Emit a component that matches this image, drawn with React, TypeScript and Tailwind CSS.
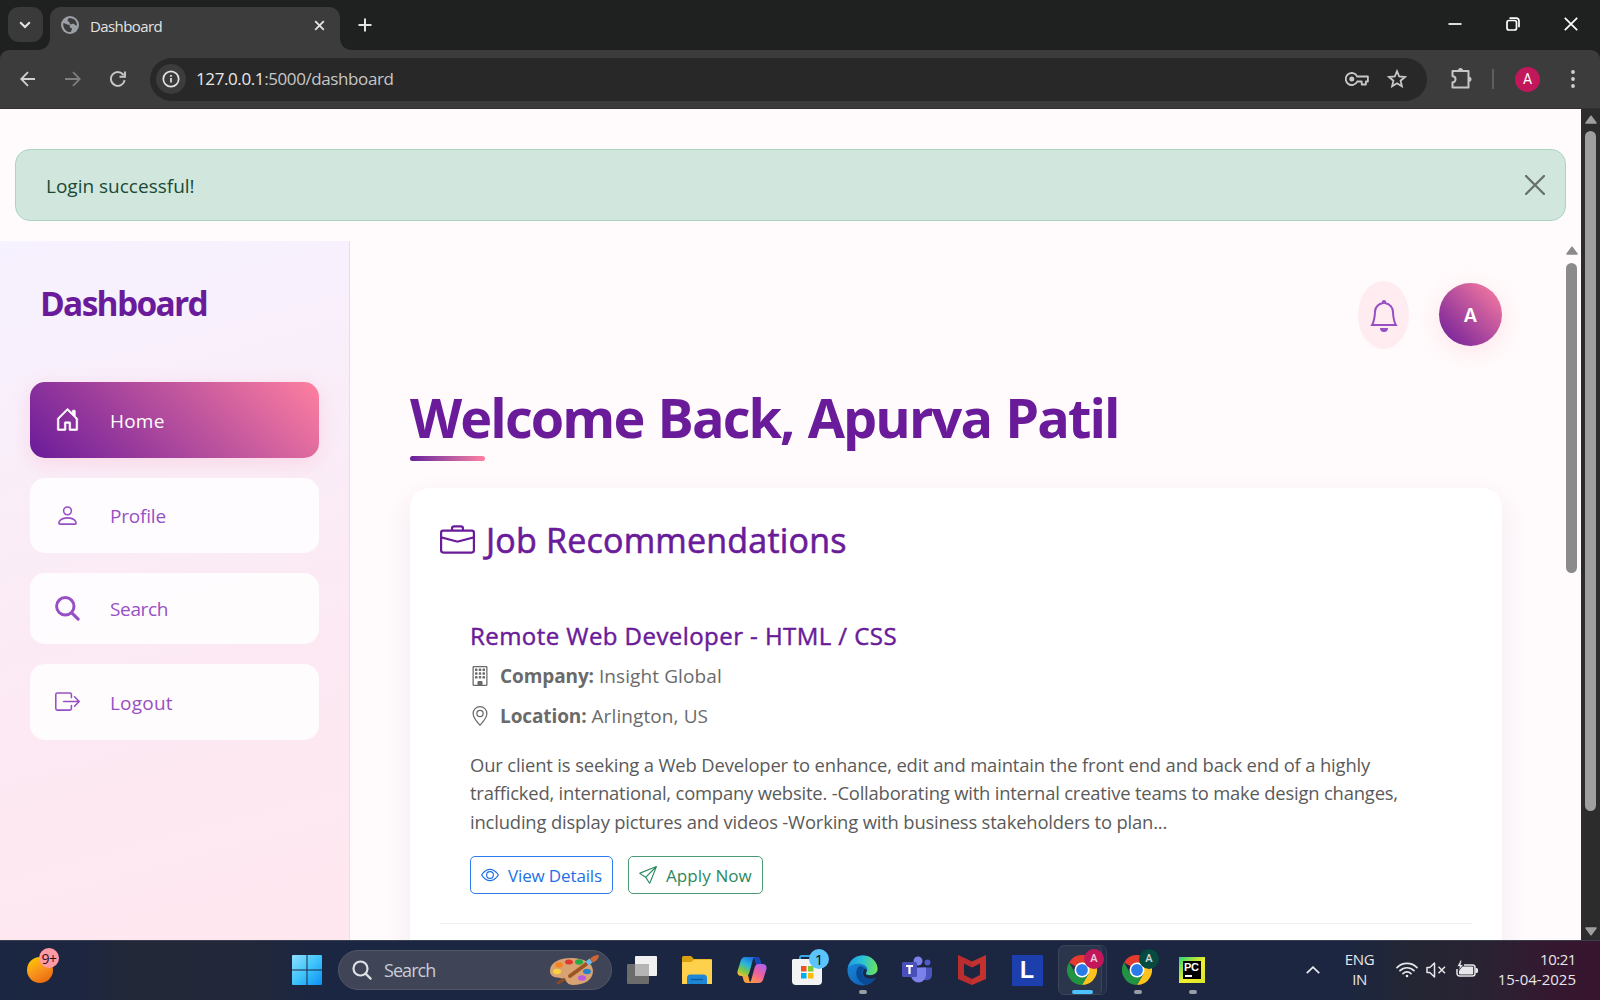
import React from "react";
import {
  BsHouseDoor,
  BsPerson,
  BsBoxArrowRight,
  BsBell,
  BsBriefcase,
  BsBuilding,
  BsGeoAlt,
  BsEye,
  BsSend,
} from "react-icons/bs";

/* ---------- Browser chrome ---------- */

function GlobeIcon() {
  return (
    <svg viewBox="0 0 18 18" className="size-[18px]">
      <circle cx="9" cy="9" r="9" fill="#9aa0a6" />
      <path
        d="M2.200 7.200c1.500 0 2.300.3 3.300 1 .9.700 2.500.2 3.200 1 .6.800-.3 1.500.3 2.200.6.600 1.900.2 2 1.300.1 1-1 1.600-1 3.300-4.400.600-8.200-3.600-7.800-8.800zM7.800 2c-.2 1.300-1.300 1.400-1.200 2.600.1 1 1.400.8 1.900 1.700.4.800 0 1.600.9 2 1.200.4 1.800-.8 3-.5 1.400.3 1.300 1.700 3.500 1.600.3-4-2.900-7.800-8.100-7.400z"
        fill="#3c3c3c"
      />
    </svg>
  );
}

function TabStrip() {
  return (
    <div className="flex h-[50px] bg-[#1f2120] text-[#e3e3e3]">
      <div className="ml-[7.500px] mt-[7px] flex size-[35px] items-center justify-center rounded-[11px] bg-[#3a3a3a]">
        <svg viewBox="0 0 12 8" className="h-[8px] w-[12px]" fill="none" stroke="currentColor" strokeWidth="2.1">
          <path d="M1.200 1.200 6 6l4.800-4.800" />
        </svg>
      </div>
      <div className="relative ml-[7.500px] mt-[7px] flex h-[43px] w-[290px] items-center rounded-t-[11px] bg-[#3c3c3c] pb-[7px]">
        <svg viewBox="0 0 12 12" className="absolute -left-[12px] bottom-0 size-[12px]">
          <path d="M12 0v12H0C7 12 12 7 12 0z" fill="#3c3c3c" />
        </svg>
        <svg viewBox="0 0 12 12" className="absolute -right-[12px] bottom-0 size-[12px]">
          <path d="M0 0v12h12C5 12 0 7 0 0z" fill="#3c3c3c" />
        </svg>
        <div className="ml-[11px]">
          <GlobeIcon />
        </div>
        <span className="ml-[11px] mt-[2px] w-[225px] text-[15px] leading-[20px] tracking-[-0.6px]">Dashboard</span>
        <svg viewBox="0 0 12 12" className="-ml-[1px] size-[11px]" fill="none" stroke="currentColor" strokeWidth="2">
          <path d="M1.300 1.300l9.400 9.400M10.700 1.300l-9.400 9.400" />
        </svg>
      </div>
      <svg viewBox="0 0 14 14" className="ml-[18px] mt-[18px] size-[14px]" fill="none" stroke="currentColor" strokeWidth="2">
        <path d="M7 .5v13M.5 7h13" />
      </svg>
      <div className="ml-auto mr-[22px] mt-[17px] flex h-[14px] items-center gap-[44px] text-white">
        <svg viewBox="0 0 14 14" className="size-[14px]" fill="none" stroke="currentColor" strokeWidth="1.700">
          <path d="M.5 7h13" />
        </svg>
        <svg viewBox="0 0 14 14" className="size-[14px]" fill="none" stroke="currentColor" strokeWidth="1.700">
          <rect x="1" y="3.500" width="9.500" height="9.500" rx="2" />
          <path d="M3.500 1.200H10A3 3 0 0 1 13 4.200v6" />
        </svg>
        <svg viewBox="0 0 14 14" className="size-[14px]" fill="none" stroke="currentColor" strokeWidth="1.700">
          <path d="M.8.8l12.400 12.400M13.200.8L.8 13.200" />
        </svg>
      </div>
    </div>
  );
}

function Toolbar() {
  return (
    <div className="bg-[#1f2120]">
      <div className="flex h-[59px] items-center rounded-t-[9px] border-b border-[#323232] bg-[#3c3c3c] text-[#c7c7c7]">
        <svg viewBox="0 0 16 16" className="ml-[20px] size-[16px]" fill="none" stroke="#d0d0d0" strokeWidth="1.800">
          <path d="M15 8H1.500M8 1.200 1.200 8 8 14.800" />
        </svg>
        <svg viewBox="0 0 16 16" className="ml-[29px] size-[16px]" fill="none" stroke="#7e7e7e" strokeWidth="1.800">
          <path d="M0 8h14M8 1.200 14.800 8 8 14.800" />
        </svg>
        <svg viewBox="0 0 16 16" className="ml-[29px] size-[16px]" fill="none" stroke="#c7c7c7" strokeWidth="1.900">
          <path d="M14.600 9.200A6.900 6.900 0 1 1 13.600 4.200" />
          <path d="M15 .4v5.400H9.500" />
        </svg>
        <div className="ml-[24px] flex h-[43px] w-[1277px] items-center rounded-full bg-[#282828]">
          <div className="ml-[6px] flex size-[30px] items-center justify-center rounded-full bg-[#3c3c3c]">
            <svg viewBox="0 0 18 18" className="size-[18px]" fill="none" stroke="#e3e3e3" strokeWidth="1.700">
              <circle cx="9" cy="9" r="7.700" />
              <path d="M9 8v4.600M9 5v1.700" />
            </svg>
          </div>
          <span className="ml-[10px] text-[17px] leading-[22px] tracking-[-0.4px] text-[#c7c7c7]">
            <span className="text-[#e8e8e8]">127.0.0.1</span>:5000/dashboard
          </span>
          <svg viewBox="0 0 24 14" className="ml-auto h-[14px] w-[24px]" fill="none" stroke="currentColor" strokeWidth="1.800">
            <path d="M12.200 4.500h10.700v5h-2v3h-4.200v-3h-4.500A6 6 0 1 1 12.200 4.500z" strokeLinejoin="round" />
            <circle cx="6.800" cy="7" r="2.500" fill="currentColor" stroke="none" />
          </svg>
          <svg viewBox="0 0 20 19" className="-mt-[2px] ml-[18px] mr-[20px] h-[19px] w-[20px]" fill="none" stroke="currentColor" strokeWidth="1.800">
            <path d="M10 2.200l2.200 5.300 5.700.5-4.300 3.700 1.300 5.600-4.900-3-4.900 3 1.300-5.600L2.100 8l5.700-.5z" />
          </svg>
        </div>
        <svg viewBox="0 0 21 21" className="-mt-[2px] ml-[24px] size-[21px]" fill="none" stroke="currentColor" strokeWidth="2">
          <path d="M1.500 3h16v16.500h-16v-5.200a3 3 0 0 0 0-6z" strokeLinejoin="round" />
          <path d="M7 2.500a2.500 2.500 0 0 1 5 0zM18 8.700a2.500 2.500 0 0 1 0 5z" fill="currentColor" stroke="none" />
        </svg>
        <div className="ml-[20px] h-[20px] w-[2px] bg-[#5e5e5e]" />
        <div className="ml-[21px] flex size-[25px] items-center justify-center rounded-full bg-[#c2185b] font-['Roboto'] text-[14px] text-white">
          A
        </div>
        <svg viewBox="0 0 4 18" className="ml-[30.500px] h-[18px] w-[4px]" fill="#d0d0d0">
          <circle cx="2" cy="2" r="1.900" />
          <circle cx="2" cy="9" r="1.900" />
          <circle cx="2" cy="16" r="1.900" />
        </svg>
      </div>
    </div>
  );
}

/* ---------- Sidebar ---------- */

function SearchGlyph() {
  return (
    <svg viewBox="0 0 25 25" className="size-[25px]" fill="none" stroke="currentColor" strokeLinecap="round">
      <circle cx="10.300" cy="10.300" r="8.700" strokeWidth="3" />
      <path d="M16.800 16.800l6.300 6.300" strokeWidth="3.100" />
    </svg>
  );
}

function NavItem({ icon, label, className }: { icon: React.ReactNode; label: string; className: string }) {
  return (
    <div className={`flex items-center rounded-[15px] pl-[24.500px] text-[19px] ${className}`}>
      <span className="flex w-[55.500px] text-[25px]">{icon}</span>
      <span className="mt-[2px] leading-[28px]">{label}</span>
    </div>
  );
}

function Sidebar() {
  return (
    <aside className="w-[350px] shrink-0 border-r border-[#f0d9e8] bg-[linear-gradient(165deg,#f7f2ff_0%,#f8f0fd_14%,#f9eef8_30%,#fce9f3_60%,#ffe7ef_100%)] px-[30px] pt-[42px]">
      <h2 className="mb-[59px] pl-[10px] text-[33.500px] font-bold leading-[40px] tracking-[-1.700px] text-[#6a1b9a]">Dashboard</h2>
      <nav className="flex w-[289px] flex-col gap-[20px] text-[#9750c4]">
        <NavItem
          icon={<BsHouseDoor className="[stroke-width:0.4px]" />}
          label="Home"
          className="h-[75.500px] bg-[linear-gradient(45deg,#6a1b9a,#ff80a0)] tracking-[0.2px] text-white shadow-[0_5px_20px_rgba(255,110,150,0.18)]"
        />
        <NavItem icon={<BsPerson />} label="Profile" className="h-[75.500px] bg-white/85 tracking-[-0.2px]" />
        <NavItem icon={<SearchGlyph />} label="Search" className="h-[70.500px] bg-white/85 tracking-[-0.35px]" />
        <NavItem icon={<BsBoxArrowRight />} label="Logout" className="h-[76px] bg-white/85 tracking-[0.2px]" />
      </nav>
    </aside>
  );
}

/* ---------- Main content ---------- */

function JobCard() {
  return (
    <section className="mt-[27px] h-[560px] rounded-[20px] bg-white px-[30px] pt-[31px] shadow-[0_10px_30px_rgba(106,27,154,0.07)]">
      <h2 className="flex h-[42px] items-center text-[34px] leading-[42px] tracking-[0.2px] text-[#6a1b9a] [-webkit-text-stroke:0.6px_#6a1b9a]">
        <BsBriefcase className="mr-[11px] size-[35px]" />
        Job Recommendations
      </h2>
      <article className="mt-[60px] border-b border-[#f1eff2] pb-[29px] pl-[30px]">
        <h3 className="text-[24px] leading-[30px] tracking-[0.44px] text-[#6a1b9a] [-webkit-text-stroke:0.45px_#6a1b9a]">
          Remote Web Developer - HTML / CSS
        </h3>
        <p className="mt-[10px] flex h-[30px] items-center text-[19px] leading-[30px] text-[#6a6a6a]">
          <BsBuilding className="mr-[10px] size-[20px]" />
          <span>
            <b className="tracking-[-0.1px]">Company:</b> <span className="tracking-[0.1px]">Insight Global</span>
          </span>
        </p>
        <p className="mt-[10px] flex h-[30px] items-center text-[19px] leading-[30px] text-[#6a6a6a]">
          <BsGeoAlt className="mr-[10px] size-[20px]" />
          <span>
            <b className="tracking-[-0.1px]">Location:</b> <span className="tracking-[0.1px]">Arlington, US</span>
          </span>
        </p>
        <p className="mt-[20px] whitespace-nowrap text-[18.4px] leading-[28.33px] tracking-[-0.17px] text-[#5a5a5a]">
          <span className="tracking-[-0.14px]">
            Our client is seeking a Web Developer to enhance, edit and maintain the front end and back end of a highly
          </span>
          <br />
          <span className="tracking-[-0.19px]">
            trafficked, international, company website. -Collaborating with internal creative teams to make design changes,
          </span>
          <br />
          including display pictures and videos -Working with business stakeholders to plan...
        </p>
        <div className="mt-[20px] flex gap-[15px] text-[17px]">
          <button className="flex h-[38px] w-[143px] items-center rounded-[5px] border border-[#2f7bf0] pl-[10px] text-[#1f6fe5]">
            <BsEye className="mr-[9px] size-[18px]" />
            <span className="mt-px tracking-[-0.14px]">View Details</span>
          </button>
          <button className="flex h-[38px] w-[135px] items-center rounded-[5px] border border-[#4b9a76] pl-[10px] text-[#2a8a5e]">
            <BsSend className="mr-[9px] size-[18px]" />
            <span className="mt-px tracking-[0.1px]">Apply Now</span>
          </button>
        </div>
      </article>
    </section>
  );
}

function ScrollArrow({ down = false, className = "" }: { down?: boolean; className?: string }) {
  return (
    <svg viewBox="0 0 12 9" className={`h-[9px] w-[12px] ${down ? "rotate-180" : ""} ${className}`} fill="currentColor" stroke="currentColor" strokeWidth="1.500" strokeLinejoin="round">
      <path d="M6 1.200 11 8H1z" />
    </svg>
  );
}

function Page() {
  return (
    <div className="flex h-[831px] overflow-hidden bg-[#fffafb]">
      <div className="flex w-[1581px] flex-col">
        <div className="ml-[15px] mt-[40px] flex h-[72px] w-[1551px] shrink-0 items-center justify-between rounded-[15px] border border-[#abd3c1] bg-[#d1e7dd] pl-[30px] pr-[20px]">
          <span className="mt-[2px] text-[19px] leading-[28px] text-[#1a4a35]">Login successful!</span>
          <svg viewBox="0 0 20 20" className="size-[20px]" fill="none" stroke="#667169" strokeWidth="2.300" strokeLinecap="round">
            <path d="M1 1l18 18M19 1L1 19" />
          </svg>
        </div>
        <div className="mt-[20px] flex h-[699px]">
          <Sidebar />
          <main className="w-[1216px] pl-[60px] pr-[64px] pt-[40px]">
            <div className="flex items-center justify-end">
              <div className="mr-[30px] flex h-[68px] w-[51px] items-center justify-center rounded-[50%] bg-[#ffecf0] text-[32px] text-[#9750c4]">
                <BsBell className="mt-[2px]" />
              </div>
              <div className="mb-[1px] flex size-[63px] items-center justify-center rounded-full bg-[linear-gradient(45deg,#6a1b9a,#ff80a0)] font-['Inter'] text-[19px] font-semibold text-white shadow-[0_5px_20px_rgba(255,110,150,0.16)]">
                <span className="mt-[3px]">A</span>
              </div>
            </div>
            <h1 className="mt-[35px] whitespace-nowrap text-[54px] font-bold leading-[66px] tracking-[-1.900px] text-[#6a1b9a] [word-spacing:2px]">
              Welcome Back, Apurva Patil
            </h1>
            <div className="mt-[6px] h-[5px] w-[75px] rounded-full bg-linear-to-r from-[#6a1b9a] to-[#ff80a0]" />
            <JobCard />
          </main>
          <div className="flex w-[15px] flex-col text-[#8b8b8b]">
            <ScrollArrow className="-ml-[0.500px] mt-[5px]" />
            <div className="mt-[8px] h-[310px] w-[11px] rounded-full bg-[#8b8b8b]" />
          </div>
        </div>
      </div>
      <div className="flex w-[19px] flex-col items-center bg-[#2c2c2c] text-[#9f9f9f]">
        <ScrollArrow className="mt-[6px]" />
        <div className="mt-[7px] h-[680px] w-[11px] rounded-full bg-[#9f9f9f]" />
        <ScrollArrow down className="mb-[4px] mt-auto" />
      </div>
    </div>
  );
}

/* ---------- Taskbar ---------- */

function TaskbarApp({ children, mark }: { children: React.ReactNode; mark?: "idle" | "active" }) {
  return (
    <div className="relative flex h-[60px] w-[55px] items-center justify-center">
      {mark === "active" && (
        <>
          <span className="absolute left-[4px] top-[5px] h-[50px] w-[48px] rounded-[6px] border border-[#343e54] bg-[#232e46]" />
          <span className="absolute left-[3px] top-[5px] h-[50px] w-[44px] rounded-[6px] border border-[#3a445a] bg-[#2b364c]" />
        </>
      )}
      <div className="relative">{children}</div>
      {mark === "idle" && <span className="absolute bottom-[6px] left-[24px] h-[4px] w-[8px] rounded-full bg-[#989ca5]" />}
      {mark === "active" && <span className="absolute bottom-[6px] left-[17px] h-[4px] w-[21px] rounded-full bg-[#4cc2ff]" />}
    </div>
  );
}

function ChromeLogo({ badge }: { badge: string }) {
  return (
    <>
      <svg viewBox="0 0 30 30" className="size-[30px]">
        <path d="M15 15 2 7.500A15 15 0 0 1 28 7.500H15z" fill="#e33b2e" />
        <path d="M28 7.500A15 15 0 0 1 15 30l6.500-11.200L15 7.500z" fill="#fcc31e" />
        <path d="M2 7.500A15 15 0 0 0 15 30l6.500-11.200H8.500z" fill="#229342" />
        <circle cx="15" cy="15" r="7.500" fill="#fff" />
        <circle cx="15" cy="15" r="5.900" fill="#2a7bea" />
      </svg>
      <span className={`absolute -right-[7px] -top-[6px] flex size-[20px] items-center justify-center rounded-full font-['Roboto'] text-[11px] font-medium text-white/80 ${badge}`}>A</span>
    </>
  );
}

function Taskbar() {
  return (
    <div className="flex h-[60px] items-center bg-[linear-gradient(90deg,#1b2642_0%,#1d2640_5%,#222838_8%,#222839_15%,#1b2642_20%,#1c2641_84%,#232634_88%,#2a2232_93%,#351830_97%,#38152f_100%)] text-[#e6e7ea] shadow-[inset_0_1px_0_#3a4050]">
      <div className="relative ml-[27px] size-[26px] rounded-full bg-[linear-gradient(150deg,#ffc400_10%,#f7941d_50%,#e8620c_95%)]">
        <span className="absolute -right-[6px] -top-[9px] flex size-[20px] items-center justify-center rounded-full bg-[#ff99a4] text-[14px] tracking-[-0.5px] text-[#2a1216]">
          9+
        </span>
      </div>
      <svg viewBox="0 0 30 30" className="ml-[239px] size-[30px]">
        <defs>
          <linearGradient id="win" x1="0" y1="0" x2="1" y2="1">
            <stop offset="0" stopColor="#8fe0ff" />
            <stop offset="0.5" stopColor="#3fc4fb" />
            <stop offset="1" stopColor="#0a91f5" />
          </linearGradient>
        </defs>
        <path d="M1 0h13.500v14.500H0V1a1 1 0 0 1 1-1zM15.500 0H29a1 1 0 0 1 1 1v13.500H15.500zM0 15.500h14.500V30H1a1 1 0 0 1-1-1zM15.500 15.500H30V29a1 1 0 0 1-1 1H15.500z" fill="url(#win)" />
      </svg>
      <div className="ml-[16px] flex h-[40px] w-[274px] items-center rounded-full border border-[#515768] bg-[#3f4557] pl-[13px] pr-[12px]">
        <svg viewBox="0 0 20 20" className="size-[20px]" fill="none" stroke="#dfe1e6" strokeWidth="2.200" strokeLinecap="round">
          <circle cx="8.500" cy="8.500" r="7" />
          <path d="M13.600 13.600l5 5" />
        </svg>
        <span className="ml-[12px] text-[18px] leading-[24px] tracking-[-0.95px] text-[#c9ccd4]">Search</span>
        <svg viewBox="0 0 50 32" className="ml-auto h-[32px] w-[50px]">
          <path d="M1 17C1 8 11 4 22 4c13 0 22 5 22 13 0 9-9 14-20 14-6 0-6-4-9-6-4-2-14 0-14-8z" fill="#d9a273" />
          <ellipse cx="10" cy="11" rx="4" ry="2.700" fill="#f5831f" />
          <ellipse cx="20" cy="8" rx="4" ry="2.500" fill="#e2372e" />
          <ellipse cx="30" cy="8" rx="4" ry="2.700" fill="#26a844" />
          <ellipse cx="8" cy="17.500" rx="4" ry="2.700" fill="#fbd341" />
          <ellipse cx="38" cy="17.500" rx="4" ry="2.700" fill="#2b7fc4" />
          <ellipse cx="33" cy="24" rx="4" ry="2.700" fill="#b65ce0" />
          <path d="M9 29 15 25.500" stroke="#8a4a22" strokeWidth="3" strokeLinecap="round" />
          <path d="M21 22 38 9.500" stroke="#9c5425" strokeWidth="3.800" strokeLinecap="round" />
          <path d="M38 9.500 42 6.500" stroke="#6fb6e6" strokeWidth="5" />
          <path d="M41 5C43 2 46 1.300 50 1c-.6 4-2.500 6-6 7.500z" fill="#c9693a" />
        </svg>
      </div>
      <div className="ml-[2.500px] flex">
        <TaskbarApp>
          <svg viewBox="0 0 32 28" className="h-[28px] w-[32px]">
            <rect x="9" y="0" width="22" height="20" rx="1" fill="#f0f0f0" />
            <rect x="1" y="8" width="22" height="20" rx="1" fill="#6c6c6c" />
            <path d="M9 8h14v12H9z" fill="#b5b5b5" />
          </svg>
        </TaskbarApp>
        <TaskbarApp>
          <svg viewBox="0 0 32 28" className="h-[28px] w-[32px]">
            <path d="M1 1.500A1.500 1.500 0 0 1 2.500 0H10l3 3h17a1 1 0 0 1 1 1v8H1z" fill="#d9a010" />
            <path d="M1 6h9l3-2.500h17a1 1 0 0 1 1 1V28H1z" fill="#ffd04c" />
            <path d="M6 28v-6a3.500 3.500 0 0 1 3.500-3.500h13A3.500 3.500 0 0 1 26 22v6z" fill="#1e86d6" />
            <path d="M10 23.500h12" stroke="#0c5797" strokeWidth="1.300" />
          </svg>
        </TaskbarApp>
        <TaskbarApp>
          <svg viewBox="0 0 30 28" className="h-[28px] w-[30px]">
            <defs>
              <linearGradient id="cpa" x1="0.7" y1="0" x2="0.2" y2="1">
                <stop offset="0" stopColor="#1c6fe0" />
                <stop offset="0.4" stopColor="#2bb5dc" />
                <stop offset="0.7" stopColor="#72c850" />
                <stop offset="1" stopColor="#f0c030" />
              </linearGradient>
              <linearGradient id="cpb" x1="0.8" y1="0" x2="0.2" y2="1">
                <stop offset="0" stopColor="#b061ee" />
                <stop offset="0.5" stopColor="#f0609c" />
                <stop offset="1" stopColor="#ff9a45" />
              </linearGradient>
            </defs>
            <path d="M17 1h3c2 0 3 1 3.500 3l1.500 5h-6z" fill="#1747b5" />
            <path d="M13 27h-3c-2 0-3-1-3.500-3L5 19h6z" fill="#f5a33a" />
            <path d="M8.500 1H19c-2 0-2.800 1.500-3.300 3.200L12.500 16c-.7 2.400-1.900 4-4.200 4H4.500C1 20-.2 17.500.7 14.500L4 4c.7-2 2.300-3 4.500-3z" fill="url(#cpa)" />
            <path d="M21.500 27H11c2 0 2.800-1.500 3.300-3.200L17.500 12c.7-2.400 1.900-4 4.200-4h3.800c3.500 0 4.700 2.500 3.800 5.500L26 24c-.7 2-2.300 3-4.500 3z" fill="url(#cpb)" />
          </svg>
        </TaskbarApp>
        <TaskbarApp>
          <svg viewBox="0 0 30 30" className="size-[30px]">
            <path d="M8 7V2.500A1.500 1.500 0 0 1 9.500 1h11" fill="none" stroke="#35a8e8" strokeWidth="1.800" />
            <path d="M0 5.500A1.500 1.500 0 0 1 1.500 4h27A1.500 1.500 0 0 1 30 5.500V26a4 4 0 0 1-4 4H4a4 4 0 0 1-4-4z" fill="#f3f3f3" />
            <path d="M9 11h5.500v5.500H9z" fill="#f1511b" />
            <path d="M16 11h5.500v5.500H16z" fill="#80cc28" />
            <path d="M9 18h5.500v5.500H9z" fill="#00adef" />
            <path d="M16 18h5.500v5.500H16z" fill="#fbbc09" />
          </svg>
          <span className="absolute -right-[7px] -top-[6px] flex size-[20px] items-center justify-center rounded-full bg-[#5cc4fb] text-[15px] text-black">1</span>
        </TaskbarApp>
        <TaskbarApp mark="idle">
          <svg viewBox="0 0 32 32" className="size-[31px]">
            <defs>
              <linearGradient id="ega" x1="0" y1="0.3" x2="1" y2="0.4">
                <stop offset="0" stopColor="#1b9de2" />
                <stop offset="0.5" stopColor="#2cc3d5" />
                <stop offset="1" stopColor="#6be25a" />
              </linearGradient>
              <linearGradient id="egb" x1="0" y1="0" x2="0.8" y2="1">
                <stop offset="0" stopColor="#1d8fe0" />
                <stop offset="1" stopColor="#0c5cae" />
              </linearGradient>
            </defs>
            <circle cx="16" cy="16" r="15.500" fill="url(#egb)" />
            <path d="M1 13C2.500 5.500 9 .5 16.500.5 25 .5 31.500 7 31.500 14c0 4.500-3.500 7-7.500 7-3.500 0-5-1.200-4.500-2.300.5-1 1.500-1.700 1.500-3.700 0-3.500-4-6-9-6-4.500 0-9 1.500-11 4z" fill="url(#ega)" />
            <path d="M12 12c-3 3-3.500 9 0 13.500 2 2.600 4 4 7 5.500 5-1 8.500-3.500 10.500-7.200-6 2.200-12.500.7-13.500-4.800-.5-2.800 1-4 2-5-1.500-2-4-2.800-6-2z" fill="#0b4a96" />
            <path d="M19.500 18.700c-.5 1.100 1 2.300 4.500 2.300 3 0 6-1.500 7.500-4.200 1 2 .8 4-1 6.500-6.500 2.700-13.500.7-14-4.300-.2-2.300.8-4 2-5 2 1 2 2.700 1 4.700z" fill="#1c2641" />
          </svg>
        </TaskbarApp>
        <TaskbarApp>
          <svg viewBox="0 0 30 28" className="h-[28px] w-[30px]">
            <circle cx="16" cy="5" r="4.500" fill="#7b83eb" />
            <circle cx="25.500" cy="6.500" r="3" fill="#5059c9" />
            <path d="M20 11.500h10V19a5.500 5.500 0 0 1-9 4z" fill="#4b53bc" />
            <path d="M9 11.500h15V19a7.500 7.500 0 0 1-15 0z" fill="#7b83eb" />
            <rect x="0" y="6" width="15" height="15" rx="1.500" fill="#4a50ba" />
            <path d="M4 10h7M7.500 10v8" stroke="#fff" strokeWidth="2.200" />
          </svg>
        </TaskbarApp>
        <TaskbarApp>
          <svg viewBox="0 0 28 30" className="h-[30px] w-[28px]">
            <path d="M0 0l14 6.500L28 0v24l-14 6-14-6z" fill="#c43230" />
            <path d="M6 8.500l8 4 8-4V20l-8 4-8-4z" fill="#1c2641" />
            <path d="M0 0l14 6.500v6L6 8.500V20l8 4v6L0 24z" fill="#a8242a" opacity=".35" />
          </svg>
        </TaskbarApp>
        <TaskbarApp>
          <div className="flex size-[31px] items-center justify-center bg-[#1d3fae] font-['Liberation_Sans'] text-[23px] font-bold text-white">L</div>
        </TaskbarApp>
        <TaskbarApp mark="active">
          <ChromeLogo badge="bg-[#c2185b]" />
        </TaskbarApp>
        <TaskbarApp mark="idle">
          <ChromeLogo badge="bg-[#064a40]" />
        </TaskbarApp>
        <TaskbarApp mark="idle">
          <div className="size-[26px] bg-[linear-gradient(135deg,#21d789_0%,#8be04a_25%,#f4ee2a_55%,#d8e62c_100%)] p-[4px]">
            <div className="flex h-full flex-col items-start bg-black pl-[1px] pt-px font-['Liberation_Sans'] text-[11px] font-bold leading-[10px] tracking-[-0.3px] text-white">
              PC
              <span className="ml-[1px] mt-[3px] h-[1.5px] w-[7px] bg-white" />
            </div>
          </div>
        </TaskbarApp>
      </div>
      <svg viewBox="0 0 14 8" className="ml-[86px] h-[8px] w-[14px]" fill="none" stroke="currentColor" strokeWidth="1.800">
        <path d="M.8 7.200 7 1.200l6.200 6" />
      </svg>
      <div className="-mt-px ml-[24px] w-[32px] text-center text-[15px] leading-[19.5px] tracking-[-0.4px]">
        ENG
        <br />
        IN
      </div>
      <svg viewBox="0 0 22 16" className="ml-[20.500px] h-[16px] w-[22px]" fill="none" stroke="currentColor" strokeWidth="1.700" strokeLinecap="round">
        <path d="M1 5.600a14 14 0 0 1 20 0M4 8.700a9.800 9.800 0 0 1 14 0M7 11.600a5.700 5.700 0 0 1 8 0" />
        <circle cx="11" cy="14" r="1.300" fill="currentColor" stroke="none" />
      </svg>
      <svg viewBox="0 0 20 16" className="ml-[8px] h-[16px] w-[20px]" fill="none" stroke="currentColor" strokeWidth="1.500" strokeLinejoin="round">
        <path d="M1 5.500h2.800L8.500 1v14l-4.700-4.500H1z" />
        <path d="M12.500 4.700l6.500 6.600M19 4.700l-6.500 6.600" />
      </svg>
      <svg viewBox="0 0 22 18" className="-mt-[3px] ml-[9.500px] h-[18px] w-[22px]" fill="none" stroke="currentColor" strokeWidth="1.500">
        <path d="M8 5h8.500A2.500 2.500 0 0 1 19 7.500v6a2.500 2.500 0 0 1-2.500 2.500h-13A2.500 2.500 0 0 1 1 13.500V9" />
        <rect x="3" y="6.500" width="14.200" height="8" rx="1" fill="currentColor" stroke="none" />
        <path d="M19.500 8h1a1.500 1.500 0 0 1 1.500 1.500v2a1.500 1.500 0 0 1-1.500 1.500h-1z" fill="currentColor" stroke="none" />
        <path d="M4.500 0 1 6.500h2.500L2.500 11 7.500 4.500H4.800L6 0z" fill="currentColor" stroke="#2a2535" strokeWidth=".8" />
      </svg>
      <div className="-mt-px ml-auto mr-[24px] text-right text-[15px] leading-[19.5px]">
        <span className="tracking-[-0.45px]">10:21</span>
        <br />
        15-04-2025
      </div>
    </div>
  );
}

export default function App() {
  return (
    <div className="h-[1000px] w-[1600px] overflow-hidden font-['Open_Sans',sans-serif]">
      <TabStrip />
      <Toolbar />
      <Page />
      <Taskbar />
    </div>
  );
}
